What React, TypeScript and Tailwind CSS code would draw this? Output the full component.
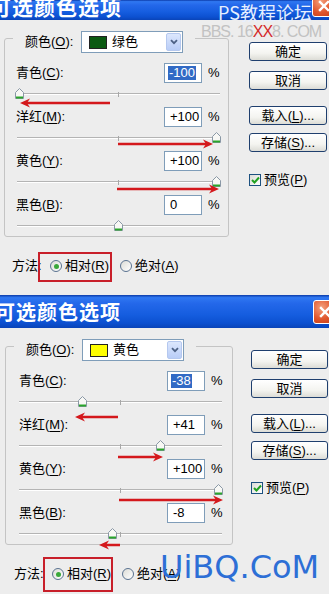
import React from "react";

type Row = { cn: string; k: string; value: number; text: string; sel?: boolean };
type Arrow = { x1: number; x2: number; y: number; dir: "l" | "r" };
type Cfg = {
  colorName: string;
  swatch: string;
  rows: Row[];
  leftW: number;
  leftPl: number;
  groupW: number;
  rowPl: number;
  thumbBase: number;
  btnW: number;
  methodPl: number;
  arrows: Arrow[];
  box: { x: number; y: number; w: number; h: number };
};

const FONT = "font-['Liberation_Sans','Noto_Sans_CJK_SC',sans-serif]";

function Mn({ cn, k, tail = ")" }: { cn: string; k: string; tail?: string }) {
  return (
    <span className="whitespace-nowrap">
      {cn}(<u className="underline underline-offset-[2px] decoration-1">{k}</u>
      {tail}
    </span>
  );
}

function Thumb({ left }: { left: number }) {
  return (
    <svg
      className="absolute top-[5px]"
      style={{ left }}
      width="9"
      height="11"
      viewBox="0 0 9 11"
    >
      <path d="M0.5 4.5 L4.5 0.5 L8.5 4.5 L8.5 10.5 L0.5 10.5 Z" fill="#f8f8f5" stroke="#8a98a6" />
      <path d="M1 9.5 H8" stroke="#2aa52a" strokeWidth="2" />
    </svg>
  );
}

function Slider({ value, base, last }: { value: number; base: number; last?: boolean }) {
  const left = base + ((value + 100) / 200) * 197;
  return (
    <div className={`relative pt-[10px] ${last ? "h-[21px]" : "h-[24px]"}`}>
      <div
        className="h-[2px] border-t border-[#b4b4b4] bg-white w-[203px]"
        style={{ marginLeft: base + 2 }}
      />
      <div className="absolute top-[9px] w-px h-[5px] bg-[#a8a8a8]" style={{ left: base + 103 }} />
      <Thumb left={left} />
    </div>
  );
}

function XPButton({ w, children }: { w: number; children: React.ReactNode }) {
  return (
    <div
      className="h-[19px] border border-[#1f3f6e] rounded-[3px] bg-[linear-gradient(180deg,#ffffff_0%,#f4f4f0_60%,#dcdcd6_100%)] flex items-center justify-center text-[13px] text-black leading-none"
      style={{ width: w }}
    >
      {children}
    </div>
  );
}

function Radio({ on }: { on?: boolean }) {
  return (
    <div className="w-[12px] h-[12px] rounded-full border border-[#5a7290] bg-[linear-gradient(135deg,#dcdcd6,#ffffff)] flex items-center justify-center">
      {on && <div className="w-[5px] h-[5px] rounded-full bg-[#3aa83a]" />}
    </div>
  );
}

function TitleText({ first }: { first: boolean }) {
  return (
    <span
      className={`font-['Noto_Sans_CJK_SC',sans-serif] font-bold text-white tracking-[1px] leading-[20px] whitespace-nowrap ${
        first ? "text-[21px] ml-[-10px] mt-[-4px]" : "text-[20px] ml-[-5px]"
      }`}
    >
      可选颜色选项
    </span>
  );
}

function CloseBtn({ cls }: { cls: string }) {
  return (
    <div
      className={`absolute ${cls} rounded-[3px] border border-white bg-[radial-gradient(circle_at_35%_30%,#f4a07c,#e0552c_55%,#c23a12)] flex items-center justify-center`}
    >
      <svg width="12" height="12" viewBox="0 0 12 12">
        <path d="M2 2 L10 10 M10 2 L2 10" stroke="white" strokeWidth="2.4" strokeLinecap="square" />
      </svg>
    </div>
  );
}

function ArrowSvg({ arrows }: { arrows: Arrow[] }) {
  return (
    <svg className="absolute inset-0 pointer-events-none" width="329" height="300">
      {arrows.map((a, i) => {
        const head =
          a.dir === "l"
            ? `${a.x1},${a.y} ${a.x1 + 10},${a.y - 4.5} ${a.x1 + 7},${a.y} ${a.x1 + 10},${a.y + 4.5}`
            : `${a.x2},${a.y} ${a.x2 - 10},${a.y - 4.5} ${a.x2 - 7},${a.y} ${a.x2 - 10},${a.y + 4.5}`;
        return (
          <g key={i}>
            <line
              x1={a.dir === "l" ? a.x1 + 6 : a.x1}
              x2={a.dir === "r" ? a.x2 - 6 : a.x2}
              y1={a.y}
              y2={a.y}
              stroke="#d4181c"
              strokeWidth="2.5"
            />
            <polygon points={head} fill="#d4181c" />
          </g>
        );
      })}
    </svg>
  );
}

function Body({ c }: { c: Cfg }) {
  return (
    <div className="flex bg-[#ededed]">
      <div className="pt-[18px] flex flex-col" style={{ width: c.leftW, paddingLeft: c.leftPl }}>
        <div
          className="border border-[#c4c4c4] rounded-[3px] flex flex-col"
          style={{ width: c.groupW }}
        >
          <div className="self-start flex items-center h-[22px] mt-[-8px] ml-[8px] pl-[12px] pr-[12px] bg-[#ededed] text-[13px]">
            <span className="w-[56px]">
              <Mn cn="颜色" k="O" tail="):" />
            </span>
            <div className="w-[102px] h-[22px] border border-[#7f9db9] bg-white flex items-center">
              <div
                className="ml-[7px] w-[18px] h-[13px] border border-[#222]"
                style={{ backgroundColor: c.swatch }}
              />
              <span className="ml-[5px]">{c.colorName}</span>
              <div className="ml-auto mr-[1px] w-[15px] h-[18px] rounded-[2px] bg-[linear-gradient(180deg,#dce7fd,#b9cdf7)] border border-[#b5c8ef] flex items-center justify-center">
                <svg width="8" height="6" viewBox="0 0 8 6">
                  <path d="M1 1.2 L4 4.2 L7 1.2" stroke="#4d6185" strokeWidth="1.8" fill="none" />
                </svg>
              </div>
            </div>
          </div>
          <div className="mt-[10px] flex flex-col text-[13px]">
            {c.rows.map((r, i) => (
              <div key={i}>
                <div className="flex items-center h-[20px]" style={{ paddingLeft: c.rowPl }}>
                  <span className="w-[148px]">
                    <Mn cn={r.cn} k={r.k} tail="):" />
                  </span>
                  <div className="w-[38px] h-[20px] border border-[#7f9db9] bg-white flex items-center pl-[3px]">
                    <span className={r.sel ? "bg-[#316ac5] text-white px-[1px] leading-[14px]" : "pl-[2px]"}>
                      {r.text}
                    </span>
                  </div>
                  <span className="ml-[6px]">%</span>
                </div>
                <Slider value={r.value} base={c.thumbBase} last={i === c.rows.length - 1} />
              </div>
            ))}
          </div>
        </div>
        <div className="mt-[19px] h-[20px] flex items-center text-[13px]" style={{ paddingLeft: c.methodPl }}>
          <span className="w-[38px]">方法:</span>
          <Radio on />
          <span className="ml-[3px]">
            <Mn cn="相对" k="R" />
          </span>
          <span className="ml-[11px]">
            <Radio />
          </span>
          <span className="ml-[3px]">
            <Mn cn="绝对" k="A" />
          </span>
        </div>
      </div>
      <div className="pt-[22px] flex flex-col">
        <XPButton w={c.btnW}>确定</XPButton>
        <div className="mt-[10px]">
          <XPButton w={c.btnW}>取消</XPButton>
        </div>
        <div className="mt-[16px]">
          <XPButton w={c.btnW}>
            <Mn cn="载入" k="L" tail=")..." />
          </XPButton>
        </div>
        <div className="mt-[8px]">
          <XPButton w={c.btnW}>
            <Mn cn="存储" k="S" tail=")..." />
          </XPButton>
        </div>
        <div className="mt-[18px] flex items-center text-[13px]">
          <div className="w-[12px] h-[12px] border border-[#1c5180] bg-[linear-gradient(135deg,#dcdcd6,#ffffff)] flex items-center justify-center">
            <svg width="9" height="8" viewBox="0 0 9 8">
              <path d="M1 4 L3.5 6.5 L8 1.5" stroke="#21a121" strokeWidth="2" fill="none" />
            </svg>
          </div>
          <span className="ml-[3px]">
            <Mn cn="预览" k="P" />
          </span>
        </div>
      </div>
    </div>
  );
}

const TITLE_BG =
  "bg-[linear-gradient(180deg,#0b3aa8_0%,#2f78f2_8%,#2468ea_25%,#155ddf_60%,#0c50d0_85%,#0a44b8_100%)]";

export default function App() {
  const d1: Cfg = {
    colorName: "绿色",
    swatch: "#0b5a12",
    rows: [
      { cn: "青色", k: "C", value: -100, text: "-100", sel: true },
      { cn: "洋红", k: "M", value: 100, text: "+100" },
      { cn: "黄色", k: "Y", value: 100, text: "+100" },
      { cn: "黑色", k: "B", value: 0, text: "0" },
    ],
    leftW: 249,
    leftPl: 4,
    groupW: 225,
    rowPl: 11,
    thumbBase: 10,
    btnW: 78,
    methodPl: 8,
    arrows: [
      { x1: 20, x2: 110, y: 103, dir: "l" },
      { x1: 118, x2: 213, y: 144, dir: "r" },
      { x1: 117, x2: 219, y: 189, dir: "r" },
    ],
    box: { x: 38, y: 252, w: 74, h: 30 },
  };
  const d2: Cfg = {
    colorName: "黄色",
    swatch: "#ffff00",
    rows: [
      { cn: "青色", k: "C", value: -38, text: "-38", sel: true },
      { cn: "洋红", k: "M", value: 41, text: "+41" },
      { cn: "黄色", k: "Y", value: 100, text: "+100" },
      { cn: "黑色", k: "B", value: -8, text: "-8" },
    ],
    leftW: 251,
    leftPl: 5,
    groupW: 228,
    rowPl: 13,
    thumbBase: 11,
    btnW: 77,
    methodPl: 9,
    arrows: [
      { x1: 75, x2: 118, y: 122, dir: "l" },
      { x1: 118, x2: 163, y: 162, dir: "r" },
      { x1: 119, x2: 223, y: 205, dir: "r" },
      { x1: 99, x2: 120, y: 250, dir: "l" },
    ],
    box: { x: 43, y: 262, w: 70, h: 35 },
  };

  return (
    <div className={`w-[329px] h-[594px] overflow-hidden bg-[#ededed] ${FONT} text-black`}>
      {/* Dialog 1 */}
      <div className="relative h-[295px] overflow-hidden">
        <div className={`relative h-[20px] overflow-hidden flex items-start ${TITLE_BG}`}>
          <TitleText first />
        </div>
        <div className="h-[275px] overflow-hidden">
          <Body c={d1} />
        </div>
        <span className="absolute left-[218px] top-[3px] text-[18px] leading-none text-[#e6efff] font-['Noto_Sans_CJK_SC',sans-serif] whitespace-nowrap">
          PS教程论坛
        </span>
        <CloseBtn cls="left-[312px] top-[-6px] w-[24px] h-[23px]" />
        <span className="absolute left-[201px] top-[24px] text-[16px] leading-none tracking-[-1px] text-[#c2c2c2] whitespace-nowrap">
          BBS. 16<span className="text-[#d42a2a]">XX</span>8. COM
        </span>
        <ArrowSvg arrows={d1.arrows} />
        <div
          className="absolute border-2 border-[#c81f2a]"
          style={{ left: d1.box.x, top: d1.box.y, width: d1.box.w, height: d1.box.h }}
        />
      </div>
      {/* Dialog 2 */}
      <div className="relative h-[299px] overflow-hidden">
        <div className={`relative h-[33px] flex items-center ${TITLE_BG}`}>
          <TitleText first={false} />
        </div>
        <Body c={d2} />
        <CloseBtn cls="left-[313px] top-[5px] w-[24px] h-[24px]" />
        <ArrowSvg arrows={d2.arrows} />
        <div
          className="absolute border-2 border-[#c81f2a]"
          style={{ left: d2.box.x, top: d2.box.y, width: d2.box.w, height: d2.box.h }}
        />
        <span className="absolute left-[160px] top-[256px] text-[32px] leading-none text-[#2d6fd6] font-['DejaVu_Sans',sans-serif] whitespace-nowrap">
          UiBQ.CoM
        </span>
      </div>
    </div>
  );
}
